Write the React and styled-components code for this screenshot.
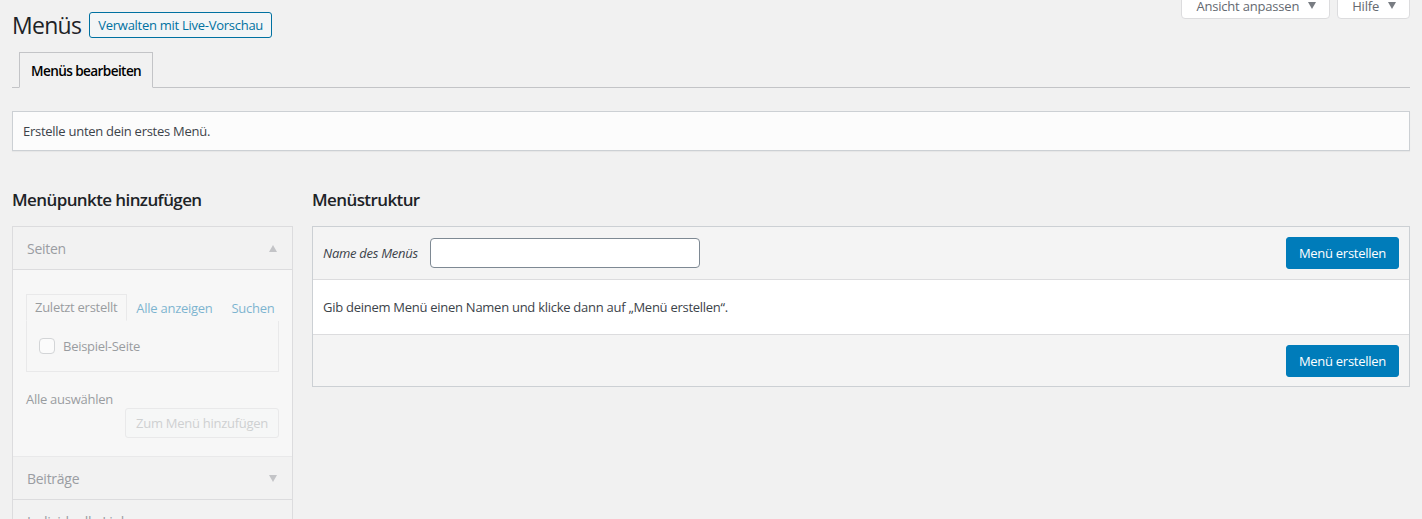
import React from "react";
import styled, { createGlobalStyle } from "styled-components";

const Global = createGlobalStyle`
  html, body {
    margin: 0;
    background: #f1f1f1;
    color: #3c434a;
    font-family: "Open Sans", "Noto Sans", sans-serif;
    font-size: 13px;
    letter-spacing: -0.27px;
    overflow: hidden;
  }
  * { box-sizing: border-box; }
`;

const Page = styled.div`
  padding: 0 12px;
`;

const TopRow = styled.div`
  display: flex;
  justify-content: space-between;
  align-items: flex-start;
`;

const TitleWrap = styled.div`
  display: flex;
  align-items: center;
  gap: 8px;
  padding-top: 12px;
`;

const Title = styled.h1`
  margin: 0;
  font-size: 23px;
  font-weight: 400;
  line-height: 26px;
  letter-spacing: -0.7px;
  color: #1d2327;
`;

const OutlineButton = styled.a`
  display: inline-flex;
  align-items: center;
  height: 26px;
  padding: 0 8px;
  border: 1px solid #0071a1;
  border-radius: 3px;
  background: #f3f5f6;
  color: #0071a1;
  font-size: 13px;
  text-decoration: none;
  white-space: nowrap;
`;

const MetaLinks = styled.div`
  display: flex;
  gap: 7px;
`;

const MetaTab = styled.button`
  display: flex;
  align-items: center;
  gap: 9px;
  height: 27px;
  margin-top: -8px;
  padding: 0 13px 0 14px;
  border: 1px solid #dcdcde;
  border-radius: 0 0 4px 4px;
  background: #fff;
  color: #646970;
  font-family: inherit;
  font-size: 13px;
  letter-spacing: -0.2px;
  white-space: nowrap;
`;

const Caret = styled.span`
  width: 0;
  height: 0;
  border-left: 4.5px solid transparent;
  border-right: 4.5px solid transparent;
  border-${({ $up }) => ($up ? "bottom" : "top")}: 7px solid ${({ $color }) => $color || "#787c82"};
`;

const NavTabs = styled.div`
  display: flex;
  margin-top: 14px;
  padding-left: 7px;
  border-bottom: 1px solid #c3c4c7;
`;

const NavTab = styled.div`
  height: 36px;
  margin-bottom: -1px;
  padding: 0 11px;
  display: flex;
  align-items: center;
  border: 1px solid #c3c4c7;
  border-bottom-color: #f1f1f1;
  background: #f1f1f1;
  color: #000;
  font-size: 13.6px;
  font-weight: 600;
  letter-spacing: -0.6px;
`;

const Notice = styled.div`
  margin-top: 23px;
  height: 40px;
  display: flex;
  align-items: center;
  padding: 0 10px;
  background: #fcfcfc;
  border: 1px solid #ccd0d4;
  box-shadow: 0 1px 1px rgba(0, 0, 0, 0.04);
  color: #3c434a;
`;

const Columns = styled.div`
  display: grid;
  grid-template-columns: 281px 1fr;
  column-gap: 19px;
  margin-top: 37px;
`;

const Heading = styled.h2`
  margin: 0 0 14px;
  font-size: 17px;
  font-weight: 600;
  line-height: 24px;
  letter-spacing: -0.6px;
  color: #1d2327;
`;

const Accordion = styled.div`
  border: 1px solid #dcdcde;
  border-bottom: none;
  background: #f7f7f7;
`;

const SectionTitle = styled.div`
  height: 43px;
  display: flex;
  align-items: center;
  justify-content: space-between;
  padding: 0 15px 0 14px;
  background: #f2f2f2;
  border-bottom: 1px solid #dcdcde;
  color: #9a9da2;
  font-size: 14px;
`;

const SectionBody = styled.div`
  padding: 24px 13px 18px 13px;
  border-bottom: 1px solid #dcdcde;
  opacity: 0.5;
`;

const Tabs = styled.div`
  display: flex;
  align-items: flex-end;
  white-space: nowrap;
`;

const SmallTab = styled.span`
  padding: 3px 9px 4px 8px;
  color: ${({ $active }) => ($active ? "#3c434a" : "#0073aa")};
  border: 1px solid ${({ $active }) => ($active ? "#dcdcde" : "transparent")};
  border-bottom: ${({ $active }) => ($active ? "1px solid #f7f7f7" : "none")};
  margin-bottom: -1px;
  position: relative;
  background: #f7f7f7;
  font-size: 13px;
`;

const TabPanel = styled.div`
  border: 1px solid #dcdcde;
  padding: 0 12px;
  display: flex;
  align-items: center;
  gap: 8px;
  height: 52px;
`;

const Box = styled.span`
  width: 16px;
  height: 16px;
  border: 1px solid #b0b4b8;
  border-radius: 4px;
  background: #fff;
`;

const Row = styled.div`
  display: flex;
  justify-content: space-between;
  align-items: flex-start;
  margin-top: 11px;
`;

const SelectAll = styled.span`
  padding-top: 7px;
  line-height: 18px;
`;

const GhostButton = styled.span`
  margin-top: 25px;
  height: 30px;
  padding: 0 10px;
  display: flex;
  align-items: center;
  border: 1px solid #dcdcde;
  border-radius: 3px;
  background: #f6f7f7;
  color: #a7aaad;
  white-space: nowrap;
`;

const MenuBox = styled.div`
  border: 1px solid #ccd0d4;
  background: #f5f5f5;
`;

const Bar = styled.div`
  height: ${({ $h }) => $h}px;
  display: flex;
  align-items: center;
  padding: 0 10px;
  gap: 12px;
  background: #f4f4f4;
  border-top: ${({ $top }) => ($top ? "1px solid #dcdcde" : "none")};
`;

const Label = styled.label`
  font-style: italic;
  color: #3c434a;
`;

const Input = styled.input`
  width: 270px;
  height: 30px;
  border: 1px solid #7e8993;
  border-radius: 4px;
  background: #fff;
`;

const Primary = styled.button`
  margin-left: auto;
  height: 32px;
  padding: 0 12px;
  border: 1px solid #007cba;
  border-radius: 3px;
  background: #007cba;
  color: #fff;
  font-family: inherit;
  font-size: 13px;
  letter-spacing: inherit;
`;

const Body = styled.div`
  height: 55px;
  padding: 0 10px;
  display: flex;
  align-items: center;
  background: #fff;
  border-top: 1px solid #dcdcde;
`;

export default function App() {
  return (
    <Page>
      <Global />
      <TopRow>
        <TitleWrap>
          <Title>Menüs</Title>
          <OutlineButton>Verwalten mit Live-Vorschau</OutlineButton>
        </TitleWrap>
        <MetaLinks>
          <MetaTab>
            Ansicht anpassen <Caret />
          </MetaTab>
          <MetaTab>
            Hilfe <Caret />
          </MetaTab>
        </MetaLinks>
      </TopRow>

      <NavTabs>
        <NavTab>Menüs bearbeiten</NavTab>
      </NavTabs>

      <Notice>Erstelle unten dein erstes Menü.</Notice>

      <Columns>
        <div>
          <Heading>Menüpunkte hinzufügen</Heading>
          <Accordion>
            <SectionTitle>
              Seiten <Caret $up $color="#c3c4c7" />
            </SectionTitle>
            <SectionBody>
              <Tabs>
                <SmallTab $active>Zuletzt erstellt</SmallTab>
                <SmallTab>Alle anzeigen</SmallTab>
                <SmallTab>Suchen</SmallTab>
              </Tabs>
              <TabPanel>
                <Box />
                Beispiel-Seite
              </TabPanel>
              <Row>
                <SelectAll>Alle auswählen</SelectAll>
                <GhostButton>Zum Menü hinzufügen</GhostButton>
              </Row>
            </SectionBody>
            <SectionTitle>
              Beiträge <Caret $color="#c3c4c7" />
            </SectionTitle>
            <SectionTitle>Individuelle Links</SectionTitle>
          </Accordion>
        </div>
        <div>
          <Heading>Menüstruktur</Heading>
          <MenuBox>
            <Bar $h={52}>
              <Label>Name des Menüs</Label>
              <Input />
              <Primary>Menü erstellen</Primary>
            </Bar>
            <Body>Gib deinem Menü einen Namen und klicke dann auf „Menü erstellen“.</Body>
            <Bar $h={52} $top>
              <Primary>Menü erstellen</Primary>
            </Bar>
          </MenuBox>
        </div>
      </Columns>
    </Page>
  );
}
